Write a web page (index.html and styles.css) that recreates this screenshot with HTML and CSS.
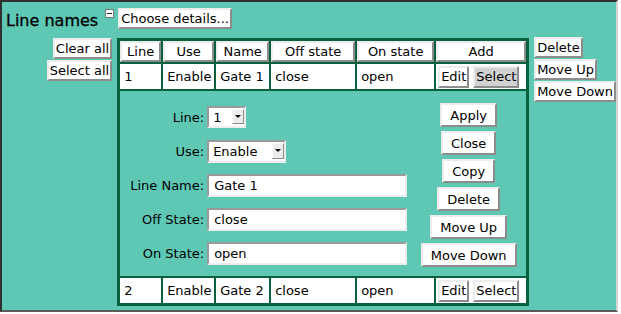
FILE: index.html
```
<!DOCTYPE html>
<html lang="en">
<head>
<meta charset="utf-8">
<title>Line names</title>
<link rel="stylesheet" href="styles.css">
</head>
<body>
<div class="frame">
  <div class="title-row">
    <h1 class="title">Line names</h1>
    <span class="toggle" aria-label="Collapse"></span>
    <button class="btn">Choose details...</button>
  </div>
  <div class="main">
    <div class="side side-left">
      <button class="btn">Clear all</button>
      <button class="btn">Select all</button>
    </div>
    <table class="lines">
      <colgroup>
        <col class="c-line"><col class="c-use"><col class="c-name"><col class="c-off"><col class="c-on"><col class="c-act">
      </colgroup>
      <thead>
        <tr class="head">
          <th><button class="btn btn-fill">Line</button></th>
          <th><button class="btn btn-fill">Use</button></th>
          <th><button class="btn btn-fill">Name</button></th>
          <th><button class="btn btn-fill">Off state</button></th>
          <th><button class="btn btn-fill">On state</button></th>
          <th><button class="btn btn-fill">Add</button></th>
        </tr>
      </thead>
      <tbody>
        <tr class="row">
          <td>1</td><td>Enable</td><td>Gate 1</td><td>close</td><td>open</td>
          <td class="act"><div class="actions"><button class="btn">Edit</button><button class="btn btn-pressed">Select</button></div></td>
        </tr>
        <tr class="edit-row">
          <td colspan="6">
            <div class="editor">
              <div class="form">
                <label class="lbl" for="f-line">Line:</label>
                <span class="select sel-line"><select id="f-line"><option>1</option><option>2</option></select><span class="arrow"></span></span>
                <label class="lbl" for="f-use">Use:</label>
                <span class="select sel-use"><select id="f-use"><option>Enable</option><option>Disable</option></select><span class="arrow"></span></span>
                <label class="lbl" for="f-name">Line Name:</label>
                <input class="field" id="f-name" type="text" value="Gate 1">
                <label class="lbl" for="f-off">Off State:</label>
                <input class="field" id="f-off" type="text" value="close">
                <label class="lbl" for="f-on">On State:</label>
                <input class="field" id="f-on" type="text" value="open">
              </div>
              <div class="form-actions">
                <button class="btn btn-lg">Apply</button>
                <button class="btn btn-lg">Close</button>
                <button class="btn btn-lg">Copy</button>
                <button class="btn btn-lg">Delete</button>
                <button class="btn btn-lg">Move Up</button>
                <button class="btn btn-lg">Move Down</button>
              </div>
            </div>
          </td>
        </tr>
        <tr class="row">
          <td>2</td><td>Enable</td><td>Gate 2</td><td>close</td><td>open</td>
          <td class="act"><div class="actions"><button class="btn">Edit</button><button class="btn">Select</button></div></td>
        </tr>
      </tbody>
    </table>
    <div class="side side-right">
      <button class="btn">Delete</button>
      <button class="btn">Move Up</button>
      <button class="btn">Move Down</button>
    </div>
  </div>
</div>
</body>
</html>
```
FILE: styles.css
```
html, body {
  margin: 0;
  padding: 0;
  background: #ffffff;
}

body {
  font-family: "DejaVu Sans", "Liberation Sans", sans-serif;
  font-size: 13px;
  color: #000;
}

.frame {
  box-sizing: border-box;
  width: 618px;
  height: 312px;
  background: #5ec8b5;
  border-top: 2px solid #303030;
  border-left: 2px solid #303030;
  border-right: 2px solid #d6d6d6;
  border-bottom: 2px solid #5a5a5a;
  overflow: hidden;
}

.title-row {
  display: flex;
  align-items: flex-start;
  padding: 6px 0 0 4px;
}

.title {
  margin: 0;
  font-size: 16px;
  font-weight: normal;
  line-height: 25px;
  height: 21px;
  -webkit-text-stroke: 0.3px #000;
}

.toggle {
  position: relative;
  box-sizing: border-box;
  width: 9px;
  height: 9px;
  margin: 1px 0 0 7px;
  background: #fff;
  border: 1px solid #7a7a7a;
}

.toggle::before {
  content: "";
  position: absolute;
  left: 1px;
  top: 3px;
  width: 5px;
  height: 1px;
  background: #222;
}

.title-row .btn {
  margin-left: 4px;
}

.btn {
  box-sizing: border-box;
  height: 21px;
  padding: 0 1px;
  margin: 0;
  font-family: "DejaVu Sans", "Liberation Sans", sans-serif;
  font-size: 13px;
  color: #000;
  background: #fff;
  border: 2px solid;
  border-color: #ececec #8c8c8c #8c8c8c #ececec;
  border-radius: 0;
  line-height: 15px;
  white-space: nowrap;
}

.btn-pressed {
  background: #d2d2d2;
}

.btn-fill {
  display: block;
  width: 100%;
}

.btn-lg {
  height: 24px;
  padding: 0 8px;
}

.main {
  display: flex;
  align-items: flex-start;
  gap: 5px;
  margin-top: 8px;
}

.side {
  display: flex;
  flex-direction: column;
  gap: 1px;
}

.side-left {
  width: 111px;
  align-items: flex-end;
  margin-top: 1px;
}

.side-right {
  align-items: flex-start;
}

.lines {
  table-layout: fixed;
  width: 412px;
  border-collapse: separate;
  border-spacing: 2px;
  background: #07613d;
  border: 1px solid #07613d;
  margin-top: 1px;
}

.c-line { width: 41px; }
.c-use { width: 51px; }
.c-name { width: 53px; }
.c-off { width: 84px; }
.c-on { width: 77px; }
.c-act { width: 90px; }

.head th {
  padding: 0;
  height: 21px;
  background: #07613d;
  font-weight: normal;
}

.row td {
  height: 25px;
  padding: 0 4px;
  background: #fff;
  white-space: nowrap;
  overflow: hidden;
}

.row td.act {
  padding: 0 2px;
}

.actions {
  display: flex;
  gap: 4px;
}

.actions .btn {
  height: 22px;
}

.edit-row td {
  background: #5ec8b5;
  padding: 9px 0 6px;
}

.editor {
  display: flex;
  align-items: flex-start;
}

.form {
  display: grid;
  grid-template-columns: 84px 200px;
  column-gap: 3px;
  grid-auto-rows: 34px;
  align-items: center;
}

.lbl {
  text-align: right;
}

.select {
  position: relative;
  justify-self: start;
  display: block;
}

.select select {
  display: block;
  box-sizing: border-box;
  -webkit-appearance: none;
  appearance: none;
  height: 22px;
  padding: 0 0 0 4px;
  margin: 0;
  font-family: "DejaVu Sans", "Liberation Sans", sans-serif;
  font-size: 13px;
  color: #000;
  background: #fff;
  border: 2px solid;
  border-color: #9a9a9a #ececec #ececec #9a9a9a;
  border-radius: 0;
}

.sel-line select { width: 39px; }
.sel-use select { width: 79px; height: 23px; }

.arrow {
  position: absolute;
  right: 2px;
  top: 3px;
  box-sizing: border-box;
  width: 12px;
  height: 15px;
  background: #ececec;
  border: 1px solid;
  border-color: #fafafa #8c8c8c #8c8c8c #fafafa;
  pointer-events: none;
}

.sel-use .arrow {
  height: 16px;
}

.arrow::before {
  content: "";
  position: absolute;
  left: 2px;
  top: 5px;
  border-left: 3px solid transparent;
  border-right: 3px solid transparent;
  border-top: 3px solid #000;
}

.field {
  box-sizing: border-box;
  width: 200px;
  height: 23px;
  margin: 0;
  padding: 0 5px;
  font-family: "DejaVu Sans", "Liberation Sans", sans-serif;
  font-size: 13px;
  color: #000;
  background: #fff;
  border: 2px solid;
  border-color: #9a9a9a #ececec #ececec #9a9a9a;
  border-radius: 0;
}

.form-actions {
  width: 99px;
  margin-left: 12px;
  padding-top: 3px;
  display: flex;
  flex-direction: column;
  align-items: center;
  gap: 4px;
}
```
